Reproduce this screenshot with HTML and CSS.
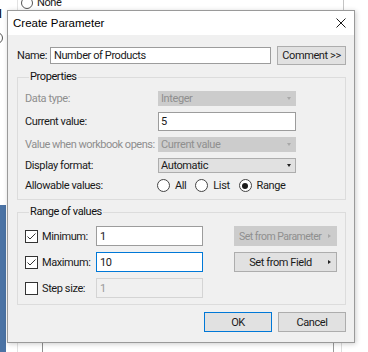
FILE: index.html
```html
<!DOCTYPE html>
<html lang="en">
<head>
  <meta charset="UTF-8">
  <title>Create Parameter</title>
  <link rel="stylesheet" href="styles.css">
</head>
<body>
  <!-- workbook behind the dialog -->
  <div class="backdrop">
    <div class="bg-option"><span class="bg-radio"></span>None</div>
    <div class="bg-heading">d</div>
    <span class="bg-radio bg-radio-cut"></span>
    <div class="bg-line l1"></div>
    <div class="bg-line l2"></div>
    <div class="bg-line l3"></div>
    <div class="bg-line l4"></div>
    <div class="bg-line l5"></div>
    <div class="bg-line l6"></div>
    <div class="bg-side"></div>
  </div>

  <div class="dialog">
    <div class="titlebar">
      <span class="title">Create Parameter</span>
      <svg class="close" width="10" height="10" viewBox="0 0 10 10">
        <path d="M0.5 0.5 L9.5 9.5 M9.5 0.5 L0.5 9.5" stroke="#1a1a1a" stroke-width="1" fill="none"/>
      </svg>
    </div>

    <div class="content">
      <div class="name-row">
        <span class="name-label">Name:</span>
        <div class="field name-field">Number of Products</div>
        <div class="btn comment-btn">Comment &gt;&gt;</div>
      </div>

      <fieldset class="group">
        <legend>Properties</legend>
        <div class="prop-grid">
          <span class="lbl off">Data type:</span>
          <div class="select off">Integer<i class="caret"></i></div>

          <span class="lbl">Current value:</span>
          <div class="field">5</div>

          <span class="lbl off long">Value when workbook opens:</span>
          <div class="select off">Current value<i class="caret"></i></div>

          <span class="lbl">Display format:</span>
          <div class="select">Automatic<i class="caret"></i></div>

          <span class="lbl">Allowable values:</span>
          <div class="radios">
            <span class="radio-item"><span class="radio"></span>All</span>
            <span class="radio-item"><span class="radio"></span>List</span>
            <span class="radio-item"><span class="radio on"></span>Range</span>
          </div>
        </div>
      </fieldset>

      <fieldset class="group range">
        <legend>Range of values</legend>
        <div class="range-grid">
          <svg class="check" width="13" height="13" viewBox="0 0 13 13">
            <rect x="0.5" y="0.5" width="12" height="12" fill="#fff" stroke="#333"/>
            <path d="M2.5 6.5 L5 9 L10.5 3.5" stroke="#333" fill="none"/>
          </svg>
          <span class="lbl">Minimum:</span>
          <div class="field">1</div>
          <div class="btn side-btn off">Set from Parameter<i class="arrow"></i></div>

          <svg class="check" width="13" height="13" viewBox="0 0 13 13">
            <rect x="0.5" y="0.5" width="12" height="12" fill="#fff" stroke="#333"/>
            <path d="M2.5 6.5 L5 9 L10.5 3.5" stroke="#333" fill="none"/>
          </svg>
          <span class="lbl">Maximum:</span>
          <div class="field focus">10</div>
          <div class="btn side-btn">Set from Field<i class="arrow"></i></div>

          <svg class="check" width="13" height="13" viewBox="0 0 13 13">
            <rect x="0.5" y="0.5" width="12" height="12" fill="#fff" stroke="#333"/>
          </svg>
          <span class="lbl">Step size:</span>
          <div class="field off">1</div>
        </div>
      </fieldset>

      <div class="actions">
        <div class="btn default">OK</div>
        <div class="btn">Cancel</div>
      </div>
    </div>
  </div>
</body>
</html>
```

FILE: styles.css
```css
body {
  margin: 0;
  width: 368px;
  height: 352px;
  position: relative;
  overflow: hidden;
  background: #fff;
  font-family: Roboto, "Liberation Sans", sans-serif;
  font-size: 11px;
  letter-spacing: -0.4px;
  color: #1a1a1a;
}

/* ---- stuff behind the dialog ---- */
.bg-option {
  position: absolute;
  left: 21px;
  top: -4px;
  display: flex;
  align-items: center;
  gap: 4px;
  line-height: 14px;
}

.bg-radio {
  display: inline-block;
  width: 10px;
  height: 10px;
  border: 1px solid #555;
  border-radius: 50%;
  background: #fff;
}

.bg-radio-cut {
  position: absolute;
  left: -9px;
  top: 32px;
}

.bg-heading {
  position: absolute;
  left: -6px;
  top: 6px;
  font: bold 13px "Liberation Sans", sans-serif;
  color: #222;
}

.bg-line {
  position: absolute;
  width: 1px;
}
.l1 { left: 17px; top: 0; height: 12px; background: #e2e2e2; }
.l2 { left: 343px; top: 0; height: 12px; background: #c4c4c4; }
.l3 { left: 17px; top: 340px; height: 12px; background: #e2e2e2; }
.l4 { left: 42px; top: 340px; height: 12px; background: #8f8f8f; }
.l5 { left: 333px; top: 340px; height: 12px; background: #9a9a9a; }
.l6 { left: 341px; top: 340px; height: 12px; background: #dcdcdc; }

.bg-side {
  position: absolute;
  left: 0;
  top: 205px;
  width: 6px;
  height: 147px;
  background: #4b73a5;
}

/* ---- dialog window ---- */
.dialog {
  position: absolute;
  left: 7px;
  top: 10px;
  width: 348px;
  height: 333px;
  box-sizing: border-box;
  border: 1px solid #9a9a9a;
  background: #f0f0f0;
  box-shadow: 1px 1px 5px rgba(0, 0, 0, 0.2);
  display: flex;
  flex-direction: column;
}

.titlebar {
  height: 24px;
  background: #fff;
  display: flex;
  align-items: center;
  justify-content: space-between;
  padding: 0 8px 0 5px;
}

.title {
  font: 11.5px "Liberation Sans", sans-serif;
  letter-spacing: 0;
  color: #000;
}

.content {
  padding: 11px 8px 9px 9px;
  display: flex;
  flex-direction: column;
}

.name-row {
  display: flex;
  align-items: center;
  height: 19px;
}

.name-label {
  width: 33px;
}

.field {
  box-sizing: border-box;
  height: 20px;
  border: 1px solid #9c9c9c;
  background: #fff;
  padding: 0 3px;
  display: flex;
  align-items: center;
}

.field.focus { border-color: #0078d7; }
.field.off { background: #f0f0f0; border-color: #d4d4d4; color: #9a9a9a; }

.name-field {
  width: 221px;
  height: 17px;
  margin-right: 6px;
}

.btn {
  box-sizing: border-box;
  height: 20px;
  border: 1px solid #adadad;
  background: #e1e1e1;
  display: flex;
  align-items: center;
  justify-content: center;
  white-space: nowrap;
}

.comment-btn {
  width: 69px;
  height: 19px;
}

/* ---- group boxes ---- */
.group {
  margin: 5px 0 0;
  padding: 7px 0 7px 7px;
  border: 1px solid #dcdcdc;
  min-width: 0;
}

.group legend {
  margin-left: 4px;
  padding: 0 1px;
  line-height: 14px;
  color: #111;
}

.range { padding-bottom: 6px; }

.lbl { white-space: nowrap; }
.lbl.off { color: #8e8e8e; }
.lbl.long { letter-spacing: -0.5px; }

.prop-grid {
  display: grid;
  grid-template-columns: 133px 138px;
  grid-template-rows: 15px 19px 15px 15px 13px;
  row-gap: 6px;
  align-items: center;
}

.prop-grid .field { height: 19px; padding-left: 2px; }

.select {
  box-sizing: border-box;
  height: 15px;
  border: 1px solid #adadad;
  background: #e1e1e1;
  padding: 0 2px;
  display: flex;
  align-items: center;
  justify-content: space-between;
}

.select.off {
  background: #cccccc;
  border-color: #cccccc;
  color: #8f8f8f;
}

.caret {
  width: 0;
  height: 0;
  margin-right: 2px;
  border-left: 2.5px solid transparent;
  border-right: 2.5px solid transparent;
  border-top: 3px solid #222;
}

.select.off .caret { border-top-color: #a8a8a8; }

.radios {
  display: flex;
  align-items: center;
  gap: 9px;
  margin-left: -1px;
}

.radio-item {
  display: flex;
  align-items: center;
  gap: 5px;
}

.radio {
  box-sizing: border-box;
  width: 13px;
  height: 13px;
  border: 1px solid #444;
  border-radius: 50%;
  background: #fff;
  display: flex;
  align-items: center;
  justify-content: center;
}

.radio.on::after {
  content: "";
  width: 6px;
  height: 6px;
  border-radius: 50%;
  background: #1a1a1a;
}

.range-grid {
  display: grid;
  grid-template-columns: 17px 54px 107px 134px;
  grid-auto-rows: 20px;
  row-gap: 6px;
  align-items: center;
}

.side-btn {
  justify-self: end;
  width: 103px;
  padding-right: 10px;
  position: relative;
}

.side-btn.off {
  justify-content: flex-start;
  padding-left: 4px;
  font-size: 10.5px;
  letter-spacing: -0.5px;
  background: #cccccc;
  border-color: #cccccc;
  color: #8f8f8f;
}

.arrow {
  position: absolute;
  right: 5px;
  top: 7px;
  width: 0;
  height: 0;
  border-top: 2.5px solid transparent;
  border-bottom: 2.5px solid transparent;
  border-left: 3px solid #222;
}

.side-btn.off .arrow { border-left-color: #a8a8a8; }

.actions {
  display: flex;
  justify-content: flex-end;
  gap: 6px;
  margin-top: 7px;
}

.actions .btn { width: 68px; }
.actions .default { border-color: #0078d7; }
```
